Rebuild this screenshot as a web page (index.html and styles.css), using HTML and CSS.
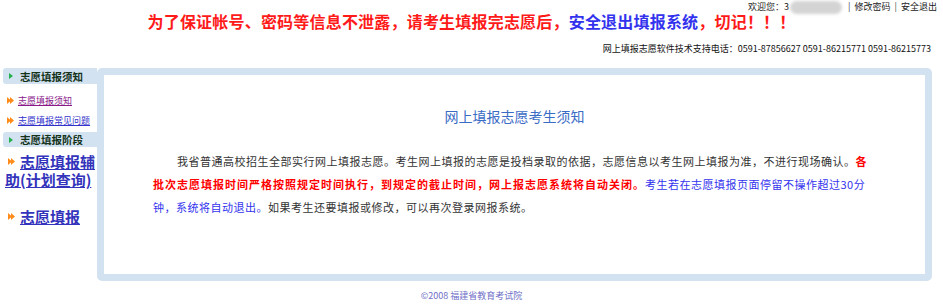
FILE: index.html
```html
<!DOCTYPE html>
<html lang="zh-CN">
<head>
<meta charset="utf-8">
<title>网上填报志愿考生须知</title>
<link rel="stylesheet" href="styles.css">
</head>
<body>
<div class="header">
  <div class="userbar">
    <span>欢迎您：3</span><span class="blur"></span><span class="sep">|</span><a class="ulink" href="#">修改密码</a><span class="sep">|</span><a class="ulink" href="#">安全退出</a>
  </div>
  <div class="warning">为了保证帐号、密码等信息不泄露，请考生填报完志愿后，<span class="warn-blue">安全退出填报系统</span>，切记！！！</div>
  <div class="phone">网上填报志愿软件技术支持电话：0591-87856627 0591-86215771 0591-86215773</div>
</div>
<div class="main">
  <div class="sidebar">
    <div class="side-head"><span class="tri"></span>志愿填报须知</div>
    <div class="side-links">
      <div class="side-row"><svg class="arr" width="7" height="7" viewBox="0 0 7 7"><polygon points="0,0 4,3.5 0,7" fill="#ff8c1a"/><polygon points="3,0 7,3.5 3,7" fill="#ff8c1a"/></svg><a class="small visited" href="#">志愿填报须知</a></div>
      <div class="side-row"><svg class="arr" width="7" height="7" viewBox="0 0 7 7"><polygon points="0,0 4,3.5 0,7" fill="#ff8c1a"/><polygon points="3,0 7,3.5 3,7" fill="#ff8c1a"/></svg><a class="small" href="#">志愿填报常见问题</a></div>
    </div>
    <div class="side-head head2"><span class="tri"></span>志愿填报阶段</div>
    <div class="big-item first"><svg class="arr big-arr" width="7" height="7" viewBox="0 0 7 7"><polygon points="0,0 4,3.5 0,7" fill="#ff8c1a"/><polygon points="3,0 7,3.5 3,7" fill="#ff8c1a"/></svg><a class="big" href="#">志愿填报辅助(计划查询)</a></div>
    <div class="big-item second"><svg class="arr big-arr" width="7" height="7" viewBox="0 0 7 7"><polygon points="0,0 4,3.5 0,7" fill="#ff8c1a"/><polygon points="3,0 7,3.5 3,7" fill="#ff8c1a"/></svg><a class="big" href="#">志愿填报</a></div>
  </div>
  <div class="panel">
    <div class="title">网上填报志愿考生须知</div>
    <p class="notice">我省普通高校招生全部实行网上填报志愿。考生网上填报的志愿是投档录取的依据，志愿信息以考生网上填报为准，不进行现场确认。<span class="red">各批次志愿填报时间严格按照规定时间执行，到规定的截止时间，网上报志愿系统将自动关闭。</span><span class="blue">考生若在志愿填报页面停留不操作超过30分钟，系统将自动退出。</span>如果考生还要填报或修改，可以再次登录网报系统。</p>
  </div>
</div>
<div class="footer">©2008 福建省教育考试院</div>
</body>
</html>
```

FILE: styles.css
```css
* { box-sizing: border-box; }
body {
  margin: 0;
  font-family: "Noto Sans CJK SC", "Liberation Sans", sans-serif;
  color: #333;
  background: #fff;
  width: 943px;
  height: 307px;
  overflow: hidden;
}
a { text-decoration: underline; }

.header { height: 68px; }
.userbar {
  display: flex;
  justify-content: flex-end;
  align-items: center;
  height: 14px;
  padding-right: 6px;
  font-size: 9px;
  line-height: 14px;
  color: #222;
}
.blur {
  display: inline-block;
  width: 52px;
  height: 13px;
  margin: 0 2px 0 1px;
  border-radius: 7px;
  background: #d4d4d4;
  filter: blur(1.5px);
}
.sep { margin: 0 4px; color: #444; }
.ulink { color: #222; text-decoration: none; }

.warning {
  margin-top: -1px;
  text-align: center;
  font-size: 16px;
  line-height: 16px;
  font-weight: bold;
  color: #ff1a1a;
  letter-spacing: 0.2px;
}
.warn-blue { color: #3333ee; }

.phone {
  margin-top: 14px;
  text-align: right;
  padding-right: 12px;
  font-size: 9px;
  line-height: 12px;
  color: #111;
}

.main {
  display: flex;
  padding: 0 11px 0 3px;
}
.sidebar { width: 94px; flex: none; }
.side-head {
  height: 16px;
  display: flex;
  align-items: center;
  background: #d3e2f1;
  border-radius: 3px 0 0 3px;
  font-size: 10.5px;
  font-weight: bold;
  color: #14331a;
  padding-left: 6px;
}
.head2 { height: 15px; margin-top: 2px; }
.tri {
  width: 0;
  height: 0;
  border-left: 4px solid #22b14c;
  border-top: 3px solid transparent;
  border-bottom: 3px solid transparent;
  margin-right: 7px;
}
.side-links { padding-top: 6px; }
.side-row {
  height: 20px;
  display: flex;
  align-items: center;
  padding-left: 4px;
}
.arr { flex: none; margin-right: 4px; }
.small { font-size: 9px; color: #3333cc; }
.small.visited { color: #8a1a8a; }

.big-item {
  padding-left: 2px;
  font-size: 15px;
  line-height: 18px;
  font-weight: bold;
}
.big-item.first { margin-top: 6px; }
.big-item.second { margin-top: 19px; }
.big-arr { margin: 0 5px 0 3px; vertical-align: 3px; }
.big { color: #3333bb; }

.panel {
  flex: 1;
  height: 213px;
  border: 7px solid #d3e2f1;
  border-radius: 5px;
  padding: 31px 0 0 49px;
}
.title {
  font-size: 14px;
  line-height: 20px;
  color: #3a6cc6;
  text-align: center;
  margin-left: -49px;
}
.notice {
  margin: 24px 0 0;
  width: 720px;
  font-size: 11px;
  line-height: 23px;
  text-indent: 24px;
  letter-spacing: 0.5px;
  color: #333;
}
.red { color: #ff0000; font-weight: bold; letter-spacing: 1px; }
.blue { color: #3333ee; }

.footer {
  text-align: center;
  font-size: 9px;
  line-height: 12px;
  margin-top: 9px;
  color: #6f6fc8;
}
```
